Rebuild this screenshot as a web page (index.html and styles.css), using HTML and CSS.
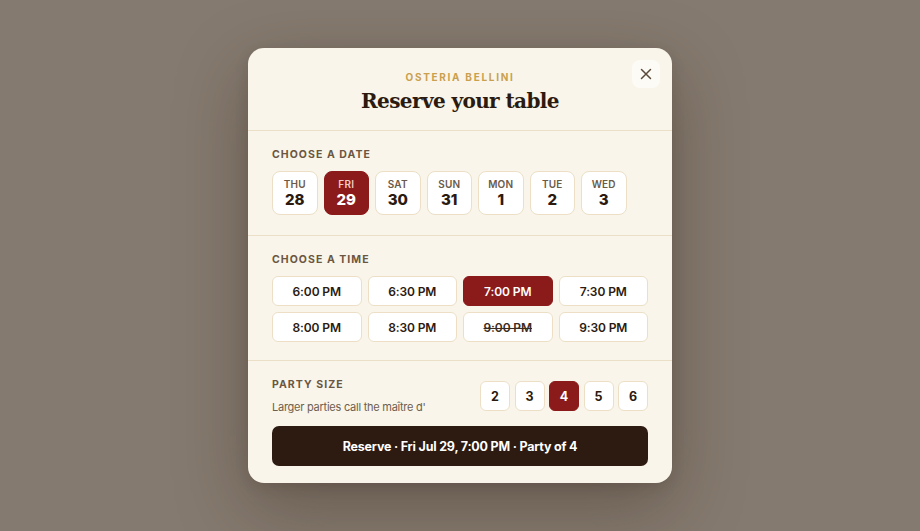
FILE: index.html
```html
<!DOCTYPE html>
<html lang="en">
<head>
<meta charset="utf-8">
<title>Reserve your table</title>
<link rel="stylesheet" href="styles.css">
</head>
<body>
<div class="overlay">
  <div class="modal">
    <button class="close" aria-label="Close">
      <svg width="12" height="12" viewBox="0 0 12 12"><path d="M1.5 1.5 L10.5 10.5 M10.5 1.5 L1.5 10.5" stroke="#5b4a3a" stroke-width="1.5" stroke-linecap="round" fill="none"/></svg>
    </button>
    <header class="head">
      <div class="eyebrow">OSTERIA BELLINI</div>
      <h1 class="title">Reserve your table</h1>
    </header>

    <section class="section section-date">
      <div class="label">CHOOSE A DATE</div>
      <div class="dates">
        <button class="date"><span class="dow">THU</span><span class="num">28</span></button>
        <button class="date selected"><span class="dow">FRI</span><span class="num">29</span></button>
        <button class="date"><span class="dow">SAT</span><span class="num">30</span></button>
        <button class="date"><span class="dow">SUN</span><span class="num">31</span></button>
        <button class="date"><span class="dow">MON</span><span class="num">1</span></button>
        <button class="date"><span class="dow">TUE</span><span class="num">2</span></button>
        <button class="date"><span class="dow">WED</span><span class="num">3</span></button>
      </div>
    </section>

    <section class="section section-time">
      <div class="label">CHOOSE A TIME</div>
      <div class="times">
        <button class="time">6:00 PM</button>
        <button class="time">6:30 PM</button>
        <button class="time selected">7:00 PM</button>
        <button class="time">7:30 PM</button>
        <button class="time">8:00 PM</button>
        <button class="time">8:30 PM</button>
        <button class="time taken">9:00 PM</button>
        <button class="time">9:30 PM</button>
      </div>
    </section>

    <section class="section section-party">
      <div class="party-row">
        <div class="party-info">
          <div class="label">PARTY SIZE</div>
          <div class="hint">Larger parties call the maître d'</div>
        </div>
        <div class="sizes">
          <button class="size">2</button>
          <button class="size">3</button>
          <button class="size selected">4</button>
          <button class="size">5</button>
          <button class="size">6</button>
        </div>
      </div>
      <button class="reserve">Reserve · Fri Jul 29, 7:00 PM · Party of 4</button>
    </section>
  </div>
</div>
</body>
</html>
```

FILE: styles.css
```css
* { box-sizing: border-box; }

html, body {
  margin: 0;
  padding: 0;
  height: 100%;
}

body {
  background: #857a6f;
  font-family: Inter, "Noto Sans", "Liberation Sans", sans-serif;
  color: #2b1a10;
}

.overlay {
  height: 100vh;
  display: flex;
  align-items: center;
  justify-content: center;
}

.modal {
  position: relative;
  width: 424px;
  background: #f9f5ea;
  border-radius: 16px;
  box-shadow: 0 24px 70px rgba(45, 28, 16, 0.35), 0 4px 14px rgba(45, 28, 16, 0.12);
  overflow: hidden;
}

button {
  font-family: inherit;
  cursor: pointer;
  margin: 0;
}

.close {
  position: absolute;
  top: 12px;
  right: 12px;
  width: 28px;
  height: 28px;
  border: none;
  border-radius: 8px;
  background: #fdfbf6;
  display: flex;
  align-items: center;
  justify-content: center;
  padding: 0;
}

.head {
  padding: 22px 24px 16px;
  text-align: center;
}

.eyebrow {
  font-size: 10px;
  line-height: 14px;
  font-weight: 700;
  letter-spacing: 0.17em;
  color: #c9a04e;
}

.title {
  margin: 4px 0 0;
  font-family: "DejaVu Serif", "Liberation Serif", serif;
  font-size: 20px;
  line-height: 26px;
  font-weight: 700;
  color: #2b1a10;
  letter-spacing: -0.6px;
}

.section {
  border-top: 1px solid #ebdfc8;
  padding: 16px 24px 20px;
}

.section-time { padding-bottom: 18px; }
.section-party { padding-bottom: 17px; }

.label {
  font-size: 10.5px;
  line-height: 16px;
  font-weight: 700;
  letter-spacing: 0.1em;
  color: #6b5642;
  margin-bottom: 8px;
}

.dates {
  display: flex;
  gap: 6px;
}

.date {
  width: 45.5px;
  height: 44px;
  padding: 0;
  background: #fff;
  border: 1px solid #ecdfc6;
  border-radius: 8px;
  display: flex;
  flex-direction: column;
  align-items: center;
  justify-content: center;
  color: #2b1a10;
}

.dow {
  font-size: 10px;
  line-height: 13px;
  font-weight: 600;
  letter-spacing: 0.02em;
  color: #6b5a48;
}

.num {
  font-size: 15px;
  line-height: 18px;
  font-weight: 800;
  color: #2b1a10;
}

.date.selected {
  background: #8b1a1a;
  border-color: #8b1a1a;
}
.date.selected .dow { color: #f1c9c3; }
.date.selected .num { color: #fff; }

.times {
  display: grid;
  grid-template-columns: repeat(4, 1fr);
  gap: 6px;
}

.time {
  height: 30px;
  padding: 0;
  background: #fff;
  border: 1px solid #ecdfc6;
  border-radius: 6px;
  font-size: 12px;
  font-weight: 600;
  letter-spacing: -0.1px;
  color: #2b1a10;
}

.time.selected {
  background: #8b1a1a;
  border-color: #8b1a1a;
  color: #fff;
}

.time.taken {
  text-decoration: line-through;
  text-decoration-thickness: 1px;
  color: #3d2c20;
}

.party-row {
  display: flex;
  align-items: center;
  justify-content: space-between;
}

.party-info .label {
  margin-bottom: 6px;
}

.hint {
  font-size: 11px;
  line-height: 16px;
  letter-spacing: -0.25px;
  color: #6e5e4e;
}

.sizes {
  display: flex;
  gap: 4.5px;
}

.size {
  width: 30px;
  height: 30px;
  padding: 0;
  background: #fff;
  border: 1px solid #ecdfc6;
  border-radius: 6px;
  font-size: 12.5px;
  font-weight: 700;
  color: #2b1a10;
}

.size.selected {
  background: #8b1a1a;
  border-color: #8b1a1a;
  color: #fff;
}

.reserve {
  display: block;
  width: 100%;
  height: 40px;
  margin-top: 11px;
  border: none;
  border-radius: 7px;
  background: #2d1a10;
  color: #fff;
  font-size: 12.5px;
  font-weight: 700;
  letter-spacing: -0.2px;
}
```
